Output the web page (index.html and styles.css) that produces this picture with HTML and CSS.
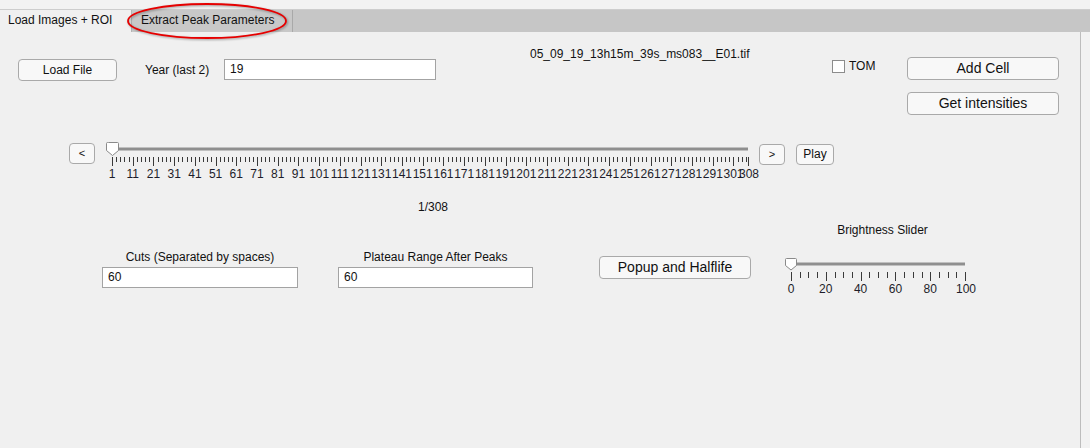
FILE: index.html
```html
<!DOCTYPE html>
<html>
<head>
<meta charset="utf-8">
<link rel="stylesheet" href="styles.css">
</head>
<body>
<div class="app">
  <div class="tabbar">
    <div class="tab tab-active">Load Images + ROI</div>
    <div class="tab tab-idle">Extract Peak Parameters</div>
    <svg class="annot" width="170" height="42" viewBox="0 0 170 42"><ellipse cx="83" cy="20" rx="79" ry="17" fill="none" stroke="#e60000" stroke-width="1.8"/></svg>
  </div>
  <div class="panel">
    <div class="row-top">
      <button class="btn btn-load">Load File</button>
      <div class="lbl-year">Year (last 2)</div>
      <div class="field field-year">19</div>
      <div class="filename">05_09_19_13h15m_39s_ms083__E01.tif</div>
      <div class="check-group"><span class="checkbox"></span><span>TOM</span></div>
      <div class="right-col">
        <button class="btn btn-big">Add Cell</button>
        <button class="btn btn-big">Get intensities</button>
      </div>
    </div>

    <div class="row-slider">
      <button class="btn btn-small btn-prev">&lt;</button>
      <svg class="slider-main" width="659" height="44" viewBox="0 0 659 44">
        <rect x="12" y="10.5" width="636" height="3" fill="#8f8f8f"/>
        <path class="minor" d="M16.5 20v5M20.5 20v5M24.5 20v5M29.5 20v5M37.5 20v5M41.5 20v5M45.5 20v5M49.5 20v5M58.5 20v5M62.5 20v5M66.5 20v5M70.5 20v5M78.5 20v5M82.5 20v5M87.5 20v5M91.5 20v5M99.5 20v5M103.5 20v5M107.5 20v5M111.5 20v5M120.5 20v5M124.5 20v5M128.5 20v5M132.5 20v5M140.5 20v5M145.5 20v5M149.5 20v5M153.5 20v5M161.5 20v5M165.5 20v5M169.5 20v5M174.5 20v5M182.5 20v5M186.5 20v5M190.5 20v5M194.5 20v5M203.5 20v5M207.5 20v5M211.5 20v5M215.5 20v5M223.5 20v5M227.5 20v5M232.5 20v5M236.5 20v5M244.5 20v5M248.5 20v5M252.5 20v5M256.5 20v5M265.5 20v5M269.5 20v5M273.5 20v5M277.5 20v5M285.5 20v5M290.5 20v5M294.5 20v5M298.5 20v5M306.5 20v5M310.5 20v5M314.5 20v5M319.5 20v5M327.5 20v5M331.5 20v5M335.5 20v5M339.5 20v5M348.5 20v5M352.5 20v5M356.5 20v5M360.5 20v5M368.5 20v5M372.5 20v5M377.5 20v5M381.5 20v5M389.5 20v5M393.5 20v5M397.5 20v5M401.5 20v5M410.5 20v5M414.5 20v5M418.5 20v5M422.5 20v5M430.5 20v5M435.5 20v5M439.5 20v5M443.5 20v5M451.5 20v5M455.5 20v5M459.5 20v5M464.5 20v5M472.5 20v5M476.5 20v5M480.5 20v5M484.5 20v5M493.5 20v5M497.5 20v5M501.5 20v5M505.5 20v5M513.5 20v5M517.5 20v5M522.5 20v5M526.5 20v5M534.5 20v5M538.5 20v5M542.5 20v5M546.5 20v5M555.5 20v5M559.5 20v5M563.5 20v5M567.5 20v5M575.5 20v5M580.5 20v5M584.5 20v5M588.5 20v5M596.5 20v5M600.5 20v5M604.5 20v5M609.5 20v5M617.5 20v5M621.5 20v5M625.5 20v5M629.5 20v5M638.5 20v5M642.5 20v5M646.5 20v5"/>
        <path class="major" d="M12.5 20v9M33.5 20v9M53.5 20v9M74.5 20v9M95.5 20v9M116.5 20v9M136.5 20v9M157.5 20v9M178.5 20v9M198.5 20v9M219.5 20v9M240.5 20v9M261.5 20v9M281.5 20v9M302.5 20v9M323.5 20v9M343.5 20v9M364.5 20v9M385.5 20v9M406.5 20v9M426.5 20v9M447.5 20v9M468.5 20v9M488.5 20v9M509.5 20v9M530.5 20v9M551.5 20v9M571.5 20v9M592.5 20v9M613.5 20v9M633.5 20v9M648.5 20v9"/>
        <g class="ticklabels">
          <text x="12" y="41">1</text><text x="32.7" y="41">11</text><text x="53.4" y="41">21</text><text x="74.2" y="41">31</text><text x="94.9" y="41">41</text><text x="115.6" y="41">51</text><text x="136.3" y="41">61</text><text x="157" y="41">71</text><text x="177.7" y="41">81</text><text x="198.4" y="41">91</text><text x="219.2" y="41">101</text><text x="239.9" y="41">111</text><text x="260.6" y="41">121</text><text x="281.3" y="41">131</text><text x="302" y="41">141</text><text x="322.7" y="41">151</text><text x="343.5" y="41">161</text><text x="364.2" y="41">171</text><text x="384.9" y="41">181</text><text x="405.6" y="41">191</text><text x="426.3" y="41">201</text><text x="447" y="41">211</text><text x="467.8" y="41">221</text><text x="488.5" y="41">231</text><text x="509.2" y="41">241</text><text x="529.9" y="41">251</text><text x="550.6" y="41">261</text><text x="571.3" y="41">271</text><text x="592.1" y="41">281</text><text x="612.8" y="41">291</text><text x="633.5" y="41">301</text><text x="649" y="41">308</text>
        </g>
        <path class="thumb" d="M8.5 5.5h9q1 0 1 1v7l-6 5l-6-5v-7q0-1 1-1z"/>
      </svg>
      <button class="btn btn-small btn-next">&gt;</button>
      <button class="btn btn-small btn-play">Play</button>
    </div>

    <div class="counter">1/308</div>

    <div class="row-params">
      <div class="param param-cuts">
        <div class="param-label">Cuts (Separated by spaces)</div>
        <div class="field">60</div>
      </div>
      <div class="param param-plateau">
        <div class="param-label">Plateau Range After Peaks</div>
        <div class="field">60</div>
      </div>
      <button class="btn btn-big btn-popup">Popup and Halflife</button>
      <div class="brightness">
        <div class="param-label">Brightness Slider</div>
        <svg class="slider-bright" width="205" height="45" viewBox="0 0 205 45">
          <rect x="11" y="11.5" width="174" height="3" fill="#8f8f8f"/>
          <path class="minor" d="M20.5 21v6M28.5 21v6M37.5 21v6M55.5 21v6M63.5 21v6M72.5 21v6M89.5 21v6M98.5 21v6M107.5 21v6M124.5 21v6M133.5 21v6M142.5 21v6M159.5 21v6M168.5 21v6M176.5 21v6"/>
          <path class="major" d="M11.5 21v9M46.5 21v9M81.5 21v9M115.5 21v9M150.5 21v9M185.5 21v9"/>
          <g class="ticklabels">
            <text x="11" y="42">0</text><text x="45.8" y="42">20</text><text x="80.6" y="42">40</text><text x="115.4" y="42">60</text><text x="150.2" y="42">80</text><text x="186" y="42">100</text>
          </g>
          <path class="thumb" d="M6.5 7.5h9q1 0 1 1v6l-5.5 4.5l-5.5-4.5v-6q0-1 1-1z"/>
        </svg>
      </div>
    </div>
  </div>
</div>
</body>
</html>
```

FILE: styles.css
```css
* { box-sizing: border-box; }

html, body {
  margin: 0;
  padding: 0;
}

body {
  width: 1090px;
  height: 448px;
  overflow: hidden;
  background: #f2f2f2;
  font-family: "Liberation Sans", Arial, sans-serif;
  font-size: 12px;
  color: #111;
}

.app {
  position: relative;
  width: 1090px;
  height: 448px;
}

/* ---------- tabs ---------- */
.tabbar {
  position: relative;
  display: flex;
  margin-top: 9px;
  height: 23px;
  background: #c6c6c6;
  border-top: 1px solid #cdcdcd;
}

.tab {
  height: 22px;
  line-height: 21px;
  white-space: nowrap;
}

.tab-active {
  width: 131px;
  padding-left: 8px;
  background: #f0f0f0;
}

.tab-idle {
  width: 162px;
  padding-left: 9px;
  background: #c8c8c8;
  border-left: 1px solid #b4b4b4;
  border-right: 1px solid #a9a9a9;
}

.annot {
  position: absolute;
  left: 124px;
  top: -9px;
  overflow: visible;
  filter: drop-shadow(1px 1px 1px rgba(0, 0, 0, 0.35));
}

/* ---------- panel ---------- */
.panel {
  width: 1081px;
  height: 416px;
  background: #f0f0f0;
  border-right: 1px solid #bdbdbd;
  overflow: hidden;
}

.btn {
  display: block;
  padding: 0;
  margin: 0;
  font-family: "Liberation Sans", Arial, sans-serif;
  font-size: 12px;
  color: #111;
  background: #f8f8f8;
  border: 1px solid #a9a9a9;
  border-radius: 4px;
  text-align: center;
}

.btn-big {
  width: 152px;
  height: 23px;
  font-size: 14px;
  line-height: 21px;
}

.field {
  height: 21px;
  line-height: 19px;
  padding-left: 5px;
  background: #ffffff;
  border: 1px solid #a3a3a3;
  font-size: 12px;
}

/* top row */
.row-top {
  display: flex;
  align-items: flex-start;
}

.btn-load {
  width: 99px;
  height: 22px;
  margin: 27px 0 0 18px;
}

.lbl-year {
  width: 107px;
  height: 22px;
  line-height: 22px;
  margin-top: 27px;
  padding-left: 28px;
  white-space: nowrap;
}

.field-year {
  width: 212px;
  margin-top: 27px;
}

.filename {
  width: 396px;
  margin-top: 15px;
  padding-left: 94px;
  line-height: 14px;
  white-space: nowrap;
}

.check-group {
  display: flex;
  align-items: center;
  gap: 4px;
  width: 75px;
  margin-top: 28px;
  line-height: 13px;
}

.checkbox {
  display: block;
  width: 13px;
  height: 13px;
  background: #fff;
  border: 1px solid #8c8c8c;
}

.right-col {
  display: flex;
  flex-direction: column;
  gap: 12px;
  margin-top: 25px;
}

/* slider row */
.row-slider {
  display: flex;
  align-items: flex-start;
  margin-top: 22px;
  padding-left: 69px;
  height: 44px;
}

.btn-small {
  height: 21px;
  line-height: 19px;
}

.btn-prev {
  width: 26px;
  margin-top: 6px;
  font-size: 11px;
}

.slider-main {
  display: block;
  margin-left: 5px;
}

.btn-next {
  width: 26px;
  margin-top: 7px;
  font-size: 11px;
}

.btn-play {
  width: 38px;
  margin-top: 7px;
  margin-left: 11px;
}

.minor, .major {
  stroke: #3a3a3a;
  stroke-width: 1;
  fill: none;
  shape-rendering: crispEdges;
}

.thumb {
  fill: #ffffff;
  stroke: #8a8a8a;
  stroke-width: 1;
}

.ticklabels text {
  font-family: "Liberation Sans", Arial, sans-serif;
  font-size: 12px;
  fill: #1d1d2a;
  text-anchor: middle;
}

.counter {
  margin-top: 19px;
  padding-left: 418px;
  line-height: 14px;
}

/* params row */
.row-params {
  display: flex;
  align-items: flex-start;
}

.param {
  margin-top: 36px;
}

.param-label {
  line-height: 14px;
  text-align: center;
  white-space: nowrap;
}

.param .field {
  margin-top: 3px;
}

.param-cuts {
  width: 196px;
  margin-left: 102px;
}

.param-plateau {
  width: 195px;
  margin-left: 40px;
}

.btn-popup {
  margin-top: 42px;
  margin-left: 66px;
}

.brightness {
  width: 205px;
  margin-left: 29px;
  margin-top: 9px;
}

.slider-bright {
  display: block;
  margin-top: 14px;
}
```
